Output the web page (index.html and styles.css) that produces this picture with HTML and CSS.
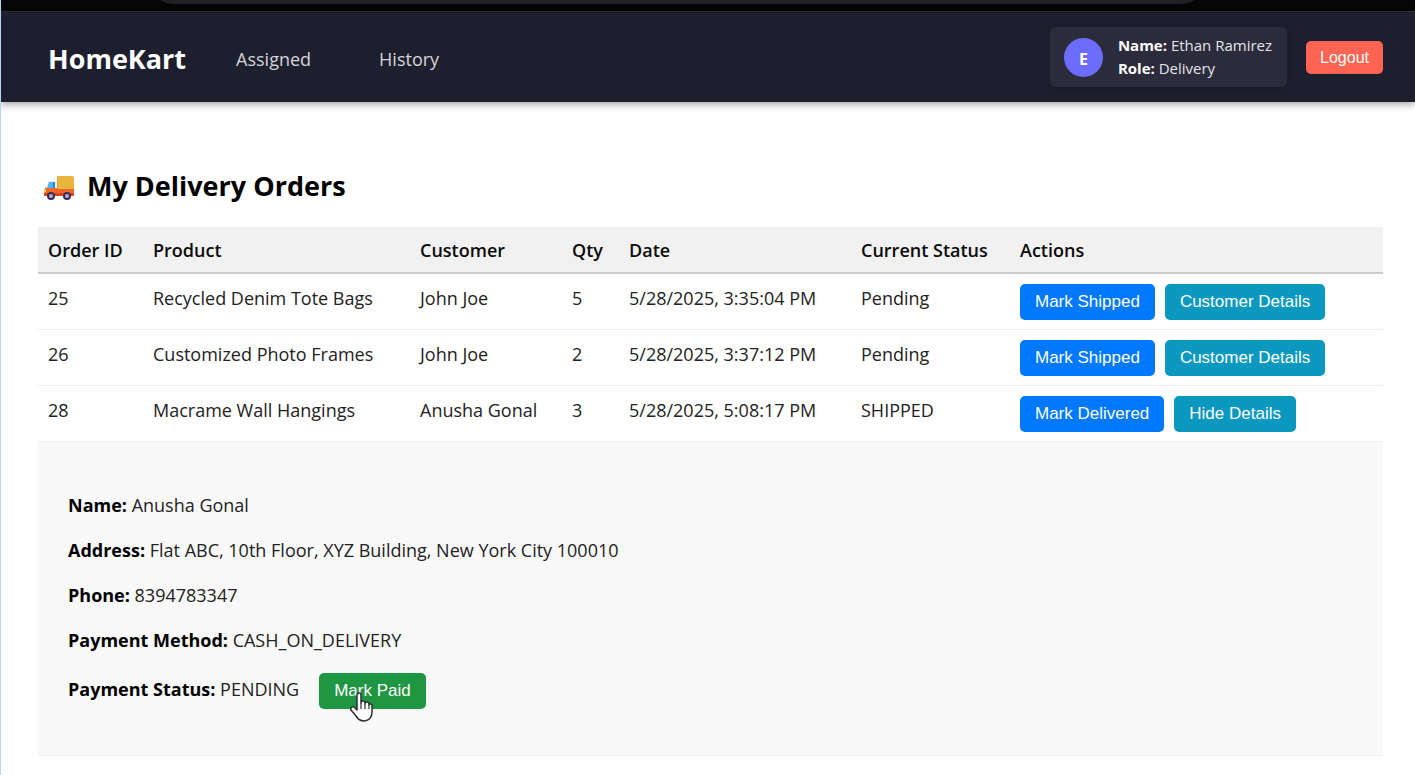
FILE: index.html
```html
<!DOCTYPE html>
<html lang="en">
<head>
<meta charset="utf-8">
<meta name="viewport" content="width=device-width, initial-scale=1">
<title>HomeKart - My Delivery Orders</title>
<link rel="stylesheet" href="styles.css">
</head>
<body>
<div class="browser-edge">
  <svg class="tab-corner" width="16" height="5" viewBox="0 0 16 5" aria-hidden="true"><path d="M0 0H16V4Q7 4 0 0Z"/></svg>
  <div class="address-edge"></div>
  <svg class="tab-corner" width="16" height="5" viewBox="0 0 16 5" aria-hidden="true"><path d="M0 0H16Q9 4 0 4Z"/></svg>
</div>
<header class="navbar">
  <div class="brand">HomeKart</div>
  <nav class="nav-links">
    <a href="#assigned">Assigned</a>
    <a href="#history">History</a>
  </nav>
  <div class="user-card">
    <div class="avatar">E</div>
    <div class="user-info">
      <div><strong>Name:</strong> Ethan Ramirez</div>
      <div><strong>Role:</strong> Delivery</div>
    </div>
  </div>
  <button class="logout" type="button">Logout</button>
</header>
<main class="page">
  <h1 class="title">
    <svg class="truck" width="30" height="24" viewBox="0 0 30 24" aria-hidden="true">
      <path fill="#e9b53d" d="M14 0h14q2 0 2 2v14H13V1q0-1 1-1z"/>
      <path fill="#d9a436" d="M13 1h1v14h-1z"/>
      <path fill="#f0662b" d="M1 12q0-1 2-1l2-6h8v8h17v6q0 1-1 1H1q-1 0-1-1z"/>
      <path fill="#f4f0f2" d="M5 5h8v7H2z"/>
      <path fill="#4db4f2" d="M5 6h6v6H3z"/>
      <path fill="#2c86d8" d="M9 6h2v6H9z"/>
      <path fill="#d94722" d="M0 17h30v2q0 1-1 1H1q-1 0-1-1z"/>
      <path fill="#ffd24a" d="M0 13h2v3H0z"/>
      <circle cx="7" cy="20" r="4" fill="#3b2a58"/><circle cx="7" cy="20" r="2" fill="#b9b2ce"/>
      <circle cx="23" cy="20" r="4" fill="#3b2a58"/><circle cx="23" cy="20" r="2" fill="#b9b2ce"/>
    </svg>
    <span>My Delivery Orders</span>
  </h1>
  <table class="orders">
    <colgroup>
      <col class="col-id"><col class="col-product"><col class="col-customer"><col class="col-qty"><col class="col-date"><col class="col-status"><col>
    </colgroup>
    <thead>
      <tr><th>Order ID</th><th>Product</th><th>Customer</th><th>Qty</th><th>Date</th><th>Current Status</th><th>Actions</th></tr>
    </thead>
    <tbody>
      <tr>
        <td>25</td><td>Recycled Denim Tote Bags</td><td>John Joe</td><td>5</td><td>5/28/2025, 3:35:04 PM</td><td>Pending</td>
        <td><div class="actions"><button class="btn btn-primary" type="button">Mark Shipped</button><button class="btn btn-info" type="button">Customer Details</button></div></td>
      </tr>
      <tr>
        <td>26</td><td>Customized Photo Frames</td><td>John Joe</td><td>2</td><td>5/28/2025, 3:37:12 PM</td><td>Pending</td>
        <td><div class="actions"><button class="btn btn-primary" type="button">Mark Shipped</button><button class="btn btn-info" type="button">Customer Details</button></div></td>
      </tr>
      <tr>
        <td>28</td><td>Macrame Wall Hangings</td><td>Anusha Gonal</td><td>3</td><td>5/28/2025, 5:08:17 PM</td><td>SHIPPED</td>
        <td><div class="actions"><button class="btn btn-primary" type="button">Mark Delivered</button><button class="btn btn-info" type="button">Hide Details</button></div></td>
      </tr>
      <tr>
        <td class="details-cell" colspan="7">
          <div class="details">
            <p><strong>Name:</strong> Anusha Gonal</p>
            <p><strong>Address:</strong> Flat ABC, 10th Floor, XYZ Building, New York City 100010</p>
            <p><strong>Phone:</strong> 8394783347</p>
            <p><strong>Payment Method:</strong> CASH_ON_DELIVERY</p>
            <div class="payment">
              <span><strong>Payment Status:</strong> PENDING</span>
              <div class="paid-wrap">
                <button class="btn btn-success" type="button">Mark Paid</button>
                <svg class="pointer" width="24" height="30" viewBox="0 0 24 30" aria-hidden="true"><path d="M7 16V3Q7 1 9 1T11 3V11Q11 9 13 9T15 11V12Q15 10 17 10T19 12V13Q19 12 20.500 12T22 14V20Q22 28 14 29Q9 29 6 24L1 18Q0 16 2 15T5 16L7 18Z" fill="#fff" stroke="#2c2f36" stroke-width="1.500" stroke-linejoin="round"/><path d="M11 11V17M15 12V17M19 13V17" fill="none" stroke="#2c2f36" stroke-width="1.200"/></svg>
              </div>
            </div>
          </div>
        </td>
      </tr>
    </tbody>
  </table>
</main>
</body>
</html>
```

FILE: styles.css
```css
* { box-sizing: border-box; }

body {
  margin: 0;
  min-height: 100vh;
  background: #fff;
  border-left: 1px solid #b5d6f5;
  color: #222;
  font: 18px/26px "Open Sans", "Noto Sans", sans-serif;
}

.browser-edge {
  display: flex;
  height: 12px;
  margin-left: -1px;
  padding: 0 220px 0 160px;
  background: #060606;
  border-bottom: 1px solid #303034;
}
.address-edge { flex: 1; height: 4px; background: #202225; }
.tab-corner { fill: #202225; }

.navbar {
  display: flex;
  align-items: center;
  height: 90px;
  margin-left: -1px;
  padding: 0 32px 0 47px;
  background: #1e1f2e;
  border-left: 1px solid #123660;
  box-shadow: 0 2px 8px rgba(0, 0, 0, 0.4);
  color: #fff;
}
.brand { padding-top: 3px; font-size: 27px; font-weight: 700; }
.nav-links { display: flex; gap: 68px; margin-left: 50px; padding-top: 3px; }
.nav-links a { color: #d4d4d8; text-decoration: none; }

.user-card {
  display: flex;
  align-items: center;
  gap: 15px;
  margin-left: auto;
  padding: 7px 15px 7px 14px;
  background: #2b2b3c;
  border-radius: 6px;
  box-shadow: 0 2px 6px rgba(0, 0, 0, 0.15);
}
.avatar {
  display: flex;
  align-items: center;
  justify-content: center;
  width: 39px;
  height: 39px;
  padding-top: 3px;
  border-radius: 50%;
  background: #6c6cff;
  font-size: 16px;
  font-weight: 700;
}
.user-info { color: #e4e4e8; font-size: 15px; line-height: 23px; }
.user-info strong { color: #fff; }

button { border: 0; color: #fff; font-family: "Liberation Sans", Arial, sans-serif; cursor: pointer; }
.logout { margin-left: 19px; padding: 7px 14px; border-radius: 5px; background: #ff6352; font-size: 16px; line-height: 19px; }

.page { padding: 62px 32px 18px 37px; }
.title {
  display: flex;
  align-items: center;
  gap: 13px;
  margin: 0 0 20px;
  padding-left: 6px;
  color: #000;
  font-size: 27px;
  font-weight: 700;
  line-height: 43px;
}
.truck { margin-top: 5px; }

.orders { width: 100%; border-collapse: separate; border-spacing: 0; table-layout: fixed; }
.col-id { width: 105px; }
.col-product { width: 267px; }
.col-customer { width: 152px; }
.col-qty { width: 57px; }
.col-date { width: 232px; }
.col-status { width: 159px; }

.orders th {
  padding: 10px 0 9px 10px;
  background: #f1f1f1;
  border-bottom: 2px solid #ccc;
  color: #0a0a0a;
  font-weight: 600;
  text-align: left;
  white-space: nowrap;
}
.orders td { padding: 10px 0 9px 10px; border-bottom: 1px solid #eee; line-height: 28px; vertical-align: top; white-space: nowrap; }
.actions { display: flex; gap: 10px; }
.btn { padding: 8px 15px; border-radius: 5px; font-size: 17px; line-height: 20px; white-space: nowrap; }
.btn-primary { background: #0078ff; }
.btn-info { background: #0a98be; }
.btn-success { background: #1f9642; }

.orders .details-cell { padding: 50px 30px 46px; background: #f9f9f9; line-height: 26px; white-space: normal; }
.details p { margin: 0 0 19px; }
.details strong { color: #000; }
.payment { display: flex; align-items: baseline; gap: 20px; padding-top: 1px; }
.paid-wrap { position: relative; }
.pointer { position: absolute; top: 19px; left: 31px; }
```
